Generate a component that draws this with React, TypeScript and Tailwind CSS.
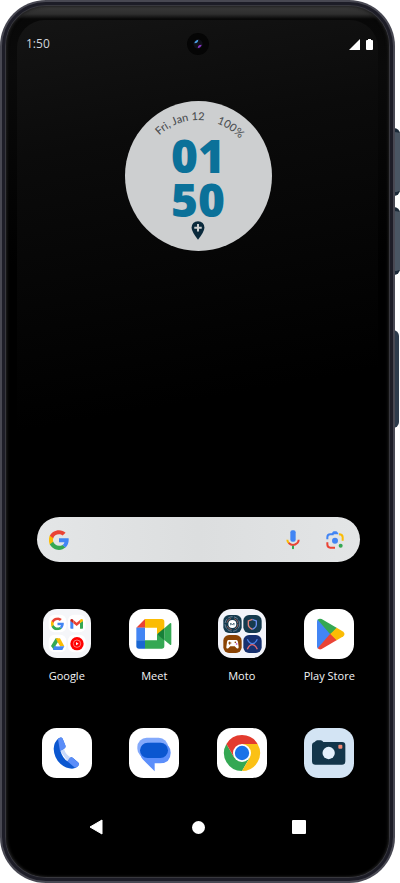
import React from 'react';

interface AppTileProps {
  name: string;
  showLabel?: boolean;
  children: React.ReactNode;
}

const GoogleG = (props: React.SVGProps<SVGSVGElement>) => (
  <svg viewBox="4 4 40 40" aria-hidden="true" {...props}>
    <path fill="#FBBC05" d="M10.500 24c0-1.600.3-3.100.8-4.600l-7.100-5.400C2.800 17 2 20.400 2 24s.8 7 2.200 10l7.100-5.400c-.5-1.500-.8-3-.8-4.600z" transform="translate(2 0) scale(.95 1)" />
    <path fill="#EA4335" d="M24 12.500c2.800 0 5.300 1 7.300 2.700l5.900-5.800C33.700 6.200 29.200 4.300 24 4.300c-8 0-15 4.500-18.200 11.100l6.600 5C14 15.600 18.600 12.500 24 12.500z" />
    <path fill="#34A853" d="M24 35.500c-5.400 0-10-3.200-11.600-7.900l-6.700 5C9 39.300 15.900 43.800 24 43.800c5 0 9.700-1.800 13.200-5.100l-6.300-4.900c-1.800 1.100-4.100 1.700-6.900 1.700z" />
    <path fill="#4285F4" d="M43.200 20.300H24v8h10.800c-.5 2.600-1.900 4.300-4 5.600l6.300 4.900c3.900-3.600 6.300-9 6.300-15.500 0-1-.1-2-.2-3z" />
  </svg>
);

const MicIcon = () => (
  <svg viewBox="0 0 40 60" className="h-5 w-3.5" aria-hidden="true">
    <rect x="12" y="1" width="16" height="34" rx="6" fill="#4285F4" />
    <path d="M3 29q0 6 5 11" fill="none" stroke="#FBBC05" strokeWidth="6" />
    <path d="M7 39q13 12 26 0q4-4 4-10" fill="none" stroke="#EA4335" strokeWidth="6" />
    <path d="M17 47h6v9l-3 2-3-2z" fill="#34A853" />
  </svg>
);

const LensIcon = () => (
  <svg viewBox="0 0 54 54" className="h-[18px] w-[18px]" aria-hidden="true">
    <path d="M4 25v-6q0-9 9-9h10" fill="none" stroke="#4285F4" strokeWidth="6" />
    <path d="M16 10l4-7q1-2 4-2h6q3 0 4 2l4 7z" fill="#4285F4" />
    <path d="M39 10q11 0 11 9v10" fill="none" stroke="#FBBC05" strokeWidth="6" />
    <path d="M4 34v6q0 10 9 10h14" fill="none" stroke="#EA4335" strokeWidth="6" />
    <circle cx="27" cy="29" r="9" fill="#4285F4" />
    <circle cx="44" cy="44" r="6" fill="#34A853" />
  </svg>
);

const GoogleFolderIcon = () => (
  <svg viewBox="0 0 150 150" className="h-[50px] w-[50px]" aria-hidden="true">
    <rect x="3" y="0" width="144" height="147" rx="42" fill="#f5f6f9" />
    <rect x="20" y="17" width="53" height="53" rx="18" fill="#fff" />
    <rect x="78" y="17" width="53" height="53" rx="18" fill="#fff" />
    <rect x="20" y="77" width="53" height="53" rx="18" fill="#fff" />
    <rect x="78" y="77" width="53" height="53" rx="18" fill="#fff" />
    <GoogleG x="27" y="25" width="39" height="39" />
    {/* Gmail */}
    <path fill="#4285F4" d="M87 59h7V42l-9-7v22q0 2 2 2z" />
    <path fill="#34A853" d="M114 59h7q2 0 2-2V35l-9 7z" />
    <path fill="#C5221F" d="M85 36v-2q1-6 7-3l2 2v10z" />
    <path fill="#FBBC04" d="M114 33l2-2q6-3 7 3v2l-9 7z" />
    <path fill="#EA4335" d="M94 43V33l10 8 10-8v10l-10 8z" />
    {/* Drive */}
    <path fill="#34A853" d="M41 88h6l6 10-17 25-9-12z" />
    <path fill="#FBBC04" d="M41 88h13l13 24H53z" />
    <path fill="#4285F4" d="M36 112h31l-6 11H33z" />
    <path fill="#fff" d="M47 100l7 12H40z" />
    {/* YouTube Music */}
    <circle cx="105" cy="104" r="20" fill="#FF0000" />
    <circle cx="105" cy="104" r="11" fill="none" stroke="#ffb3b3" strokeWidth="2" />
    <path fill="#fff" d="M102 99l8 5-8 5z" />
  </svg>
);

const MeetIcon = () => (
  <svg viewBox="0 0 150 150" className="h-[50px] w-[50px]" aria-hidden="true">
    <rect width="150" height="150" rx="44" fill="#fff" />
    <path fill="#EA4335" d="M48 30v26H22z" />
    <path fill="#FBBC04" d="M48 30h50q8 0 8 8v26L84 76V56H48z" />
    <path fill="#4285F4" d="M22 56h26v38H22z" />
    <path fill="#1967D2" d="M22 94h26v25H30q-8 0-8-8z" />
    <path fill="#34A853" d="M48 119h50q8 0 8-8V88L84 76v18H48z" />
    <path fill="#34A853" d="M106 58l17-15q4-2 4 2v60q0 4-4 2l-17-14z" />
    <path fill="#188038" d="M84 76l22-19v37z" />
  </svg>
);

const MotoFolderIcon = () => (
  <svg viewBox="0 0 150 150" className="h-[50px] w-[50px]" aria-hidden="true">
    <rect x="3" y="0" width="144" height="147" rx="42" fill="#f3f4fa" />
    <rect x="19" y="18" width="55" height="54" rx="17" fill="#153a4e" />
    <rect x="79" y="18" width="55" height="54" rx="17" fill="#153a4e" />
    <rect x="19" y="78" width="55" height="54" rx="17" fill="#8a4304" />
    <rect x="79" y="78" width="55" height="54" rx="17" fill="#16306f" />
    <circle cx="46" cy="45" r="22" fill="none" stroke="#7c8fa5" strokeWidth="2.500" strokeDasharray="14 4" />
    <circle cx="46" cy="45" r="17" fill="none" stroke="#d2705f" strokeWidth="2" strokeDasharray="18 10" />
    <circle cx="46" cy="45" r="12" fill="#fff" />
    <path d="M41 49v-7l5 6 5-6v7" fill="none" stroke="#153a4e" strokeWidth="2" />
    <path d="M106 31l12 5v12q0 7-12 13" fill="none" stroke="#6b8ff0" strokeWidth="4" />
    <path d="M106 31l-12 5v12q0 7 12 13" fill="none" stroke="#e08078" strokeWidth="4" />
    <path d="M34 93h24q4 0 5 6l2 15q0 6-6 4l-6-6H40l-6 6q-7 2-6-4l2-15q1-6 4-6z" fill="#fff" />
    <path d="M38 98v9M34 102h9" stroke="#8a4304" strokeWidth="3" />
    <circle cx="55" cy="100" r="2.500" fill="#8a4304" />
    <circle cx="59" cy="105" r="2.500" fill="#b32fc0" />
    <path d="M91 91q6 13 15 13t15-13" fill="none" stroke="#4a82e8" strokeWidth="4" />
    <path d="M91 121q6-14 15-14t15 14" fill="none" stroke="#e56a72" strokeWidth="4" />
  </svg>
);

const PlayStoreIcon = () => (
  <svg viewBox="0 0 150 150" className="h-[50px] w-[50px]" aria-hidden="true">
    <rect width="150" height="150" rx="44" fill="#fff" />
    <path fill="#4285F4" d="M42 31q-3 3-3 7v74q0 5 3 7l42-44z" />
    <path fill="#34A853" d="M41 32q5-5 12-2l46 27-19 20z" />
    <path fill="#EA4335" d="M41 118q5 5 12 2l46-27-19-20z" />
    <path fill="#FBBC04" d="M98 56l20 12q7 7 0 14L98 94 79 75z" />
  </svg>
);

const PhoneIcon = () => (
  <svg viewBox="0 0 150 150" className="h-[50px] w-[50px]" aria-hidden="true">
    <rect width="150" height="150" rx="44" fill="#fff" />
    <path fill="#c9dafb" d="M54 68l12-5q6 20 22 26l-10 12z" />
    <path
      fill="#0B57D0"
      d="M50 31Q36 42 35 62q1 28 21 46 16 14 34 14 15-2 21-12 1-4-4-8L92 89q-4-3-8 1l-7 10Q62 91 55 68l11-6q6-3 4-9l-8-21q-4-6-12-1z"
    />
    <path fill="#5B8DF8" d="M48 33q10-9 14-1l9 21q1 6-5 9l-12 7z" />
    <path fill="#5B8DF8" d="M76 100l8-10q4-4 8-1l15 13q5 4 4 8-5 7-12 9z" />
  </svg>
);

const MessagesIcon = () => (
  <svg viewBox="0 0 150 150" className="h-[50px] w-[50px]" aria-hidden="true">
    <rect width="150" height="150" rx="44" fill="#fff" />
    <rect x="25" y="29" width="92" height="61" rx="28" fill="#83A9FB" />
    <path fill="#5C8FFB" d="M64 44h33q28 4 28 30 0 31-32 32H77v24L41 94q-10-12-5-28 8-20 28-22z" />
    <rect x="33" y="44" width="84" height="46" rx="23" fill="#0B57D0" />
  </svg>
);

const ChromeIcon = () => (
  <svg viewBox="0 0 150 150" className="h-[50px] w-[50px]" aria-hidden="true">
    <rect width="150" height="150" rx="44" fill="#fff" />
    <path fill="#34A853" d="M75 129A54 54 0 0 1 28.200 48l23.400 40.500h46.800z" />
    <path fill="#FBC116" d="M121.800 48A54 54 0 0 1 75 129l23.400-40.500L75 48z" />
    <path fill="#E33B2E" d="M28.200 48a54 54 0 0 1 93.600 0H75L51.600 88.500z" />
    <circle cx="75" cy="75" r="27" fill="#fff" />
    <circle cx="75" cy="75" r="21.500" fill="#1A73E8" />
  </svg>
);

const CameraIcon = () => (
  <svg viewBox="0 0 150 150" className="h-[50px] w-[50px]" aria-hidden="true">
    <rect width="150" height="150" rx="44" fill="#d3e4f4" />
    <path fill="#12354a" d="M32 42q4-5 8-5h10q5 0 8 5h56q10 0 10 9v49q0 10-10 10H34q-10 0-10-10V51q0-7 8-9z" />
    <circle cx="74" cy="75" r="18.500" fill="#e3f0fc" />
    <rect x="103" y="50" width="12" height="12" rx="3" fill="#f48a76" />
  </svg>
);

const AppTile = ({ name, showLabel = false, children }: AppTileProps) => (
  <button type="button" aria-label={name} className="flex flex-col items-center">
    {children}
    {showLabel && (
      <span className="mt-2 font-['Open_Sans',sans-serif] text-[11px] leading-[18px] font-medium whitespace-nowrap text-gray-100">
        {name}
      </span>
    )}
  </button>
);

const StatusBar = () => (
  <div className="relative flex h-[34px] items-center justify-between pt-3.5 pr-[5px] pl-[9px]">
    <span className="font-['Open_Sans',sans-serif] text-xs leading-5 font-medium text-gray-300">1:50</span>
    <div className="absolute top-[13px] left-1/2 flex h-[22px] w-[22px] -translate-x-1/2 items-center justify-center rounded-full bg-[#050505]">
      <svg viewBox="0 0 30 30" className="h-2.5 w-2.5" aria-hidden="true">
        <circle cx="15" cy="15" r="14" fill="#101018" />
        <path d="M4 13q2-9 12-11l-2 7q-3 4-10 4z" fill="#4aa3e8" />
        <path d="M26 17q-2 9-12 10l2-6q3-4 10-4z" fill="#8b35c9" />
      </svg>
    </div>
    <div className="flex items-center gap-1.5">
      <svg viewBox="0 0 11 11" className="h-[11px] w-[11px]" aria-hidden="true">
        <path d="M11 0v11H0z" fill="#fff" />
      </svg>
      <svg viewBox="0 0 7 11" className="h-[11px] w-[7px]" aria-hidden="true">
        <path d="M2 0h3v1h1q1 0 1 1v8q0 1-1 1H1q-1 0-1-1V2q0-1 1-1h1z" fill="#fff" />
      </svg>
    </div>
  </div>
);

const ClockWidget = () => (
  <div className="relative mx-auto flex h-[150px] w-[147px] flex-col items-center rounded-[50%] bg-[#cdcfd0]">
    <svg viewBox="0 0 147 150" className="absolute inset-0 h-full w-full" role="img" aria-label="Fri, Jan 12, 100%">
      <defs>
        <path id="clock-arc" d="M17 75a56 56 0 0 1 112 0" />
      </defs>
      <g fill="#4b4e50" className="font-['Lato',sans-serif] text-[11px] font-medium">
        <text>
          <textPath href="#clock-arc" startOffset="45">Fri, Jan 12</textPath>
        </text>
        <text>
          <textPath href="#clock-arc" startOffset="107">100%</textPath>
        </text>
      </g>
    </svg>
    <div className="pt-8 font-['Open_Sans',sans-serif] text-[46px] leading-[44px] font-extrabold text-[#0b7199]">
      <div>01</div>
      <div>50</div>
    </div>
    <svg viewBox="0 0 40 56" className="h-[19px] w-3.5" aria-hidden="true">
      <path d="M20 1q18 1 19 19-1 13-19 35Q2 33 1 20 2 2 20 1z" fill="#0b2a3c" />
      <path d="M20 9v22M9 20h22" stroke="#cdcfd0" strokeWidth="6" />
    </svg>
  </div>
);

const SearchBar = () => (
  <form
    role="search"
    onSubmit={(e) => e.preventDefault()}
    className="mr-[13px] ml-3.5 flex h-[45px] items-center rounded-full bg-gradient-to-r from-[#e4e6e7] via-[#dcdedf] to-[#e3e5e6] pr-4 pl-3"
  >
    <GoogleG className="h-5 w-5 shrink-0" />
    <input type="text" aria-label="Search" className="mx-3 w-0 min-w-0 flex-1 bg-transparent text-sm text-gray-800 outline-none" />
    <button type="button" aria-label="Voice search" className="mr-[26px]">
      <MicIcon />
    </button>
    <button type="button" aria-label="Search with camera">
      <LensIcon />
    </button>
  </form>
);

const NavBar = () => (
  <nav className="mt-[41px] flex justify-between px-[66px]">
    <button type="button" aria-label="Back" className="flex h-4 w-4 items-center">
      <svg viewBox="0 0 14 16" className="h-4 w-3.5" aria-hidden="true">
        <path d="M13 1v14L1 8z" fill="#fff" stroke="#fff" strokeLinejoin="round" />
      </svg>
    </button>
    <button type="button" aria-label="Home" className="flex h-4 w-4 items-center justify-center">
      <span className="h-[13px] w-[13px] rounded-full bg-white" />
    </button>
    <button type="button" aria-label="Recent apps" className="flex h-4 w-4 items-center justify-center">
      <span className="h-3.5 w-3.5 rounded-[1px] bg-white" />
    </button>
  </nav>
);

const HomeScreen = () => (
  <main className="flex min-w-0 flex-1 flex-col rounded-[28px] bg-[linear-gradient(170deg,#141414_0%,#0b0b0b_15%,#000_45%)] pb-[38px]">
    <StatusBar />
    <div className="flex flex-1 flex-col pr-[5px] pl-1.5">
      <div className="mt-[47px]">
        <ClockWidget />
      </div>
      <div className="flex-1" />
      <SearchBar />
      <div className="mt-[47px] grid grid-cols-4">
        <AppTile name="Google" showLabel>
          <GoogleFolderIcon />
        </AppTile>
        <AppTile name="Meet" showLabel>
          <MeetIcon />
        </AppTile>
        <AppTile name="Moto" showLabel>
          <MotoFolderIcon />
        </AppTile>
        <AppTile name="Play Store" showLabel>
          <PlayStoreIcon />
        </AppTile>
      </div>
      <div className="mt-[43px] grid grid-cols-4">
        <AppTile name="Phone">
          <PhoneIcon />
        </AppTile>
        <AppTile name="Messages">
          <MessagesIcon />
        </AppTile>
        <AppTile name="Chrome">
          <ChromeIcon />
        </AppTile>
        <AppTile name="Camera">
          <CameraIcon />
        </AppTile>
      </div>
      <NavBar />
    </div>
  </main>
);

const App = () => {
  return (
    <div className="relative flex min-h-screen bg-white pr-[5px]">
      {/* side keys */}
      <div className="absolute top-32 right-0 h-[68px] w-3 rounded-md border-y-4 border-[#1c2a38] bg-[#4a5663]" />
      <div className="absolute top-[207px] right-0 h-[68px] w-3 rounded-md border-y-4 border-[#1c2a38] bg-[#4a5663]" />
      <div className="absolute top-[330px] right-px h-[98px] w-3 rounded-md bg-[#2d3b4b]" />

      <div className="relative flex min-w-0 flex-1 rounded-[46px] bg-[#484852] p-0.5">
        <div className="flex min-w-0 flex-1 rounded-[44px] bg-[#1d1d27] p-[3px]">
          <div className="flex min-w-0 flex-1 rounded-[41px] bg-[#38383e] p-px">
            <div className="flex min-w-0 flex-1 rounded-[40px] bg-[linear-gradient(to_bottom,#3a3a3a_0px,#2e2e2e_8px,#080808_13px,#0a0a0a_60px,#000_260px)] px-[11px] pt-3.5 pb-1 shadow-[inset_1px_0_3px_#202020,inset_-1px_0_3px_#1c1c1c]">
              <HomeScreen />
            </div>
          </div>
        </div>
      </div>
    </div>
  );
};

export default App;
